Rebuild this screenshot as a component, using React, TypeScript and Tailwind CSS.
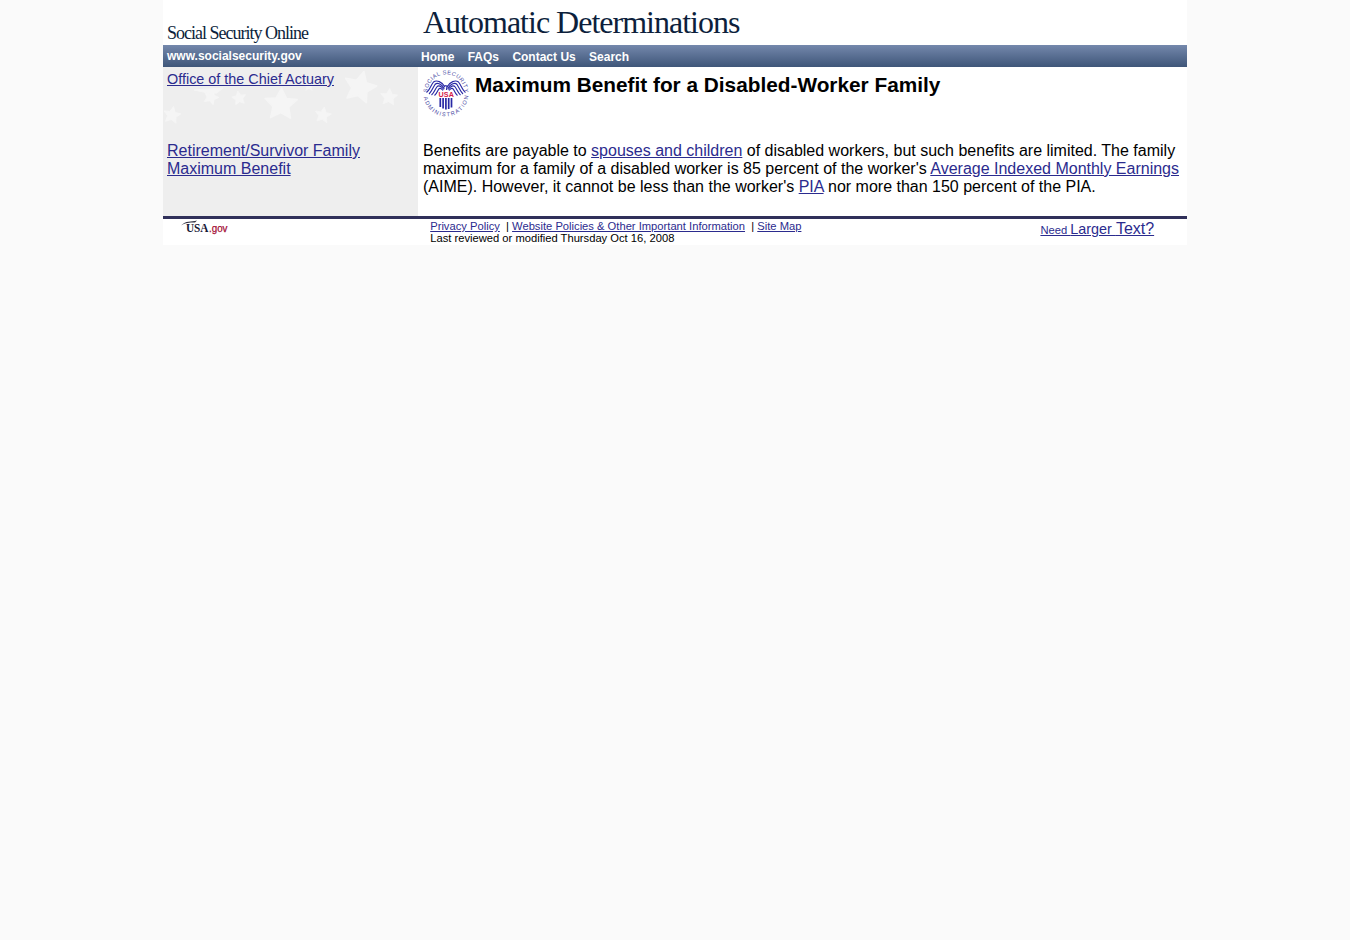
import React from 'react';

const STAR = '0,-10 3.2,-3.6 10,-3.1 4.9,1.8 6.2,8.6 0,5.4 -6.2,8.6 -4.9,1.8 -10,-3.1 -3.2,-3.6';

const stars = [
  { x: 9, y: 48, s: 0.85, r: 10 },
  { x: 48, y: 30, s: 0.75, r: 20 },
  { x: 76, y: 31, s: 0.7, r: -10 },
  { x: 118, y: 37, s: 1.6, r: 2 },
  { x: 160, y: 48, s: 0.8, r: 10 },
  { x: 197, y: 20, s: 1.6, r: 14 },
  { x: 226, y: 30, s: 0.85, r: 5 },
  { x: 146, y: 19, s: 0.5, r: 0 },
];

function Stars() {
  return (
    <svg className="absolute left-0 top-0" width="255" height="60" viewBox="0 0 255 60" aria-hidden="true">
      <g fill="#f5f5f5" stroke="#f5f5f5" strokeWidth="1" strokeLinejoin="round">
        {stars.map((p, i) => (
          <polygon key={i} points={STAR} transform={`translate(${p.x} ${p.y}) rotate(${p.r}) scale(${p.s})`} />
        ))}
        <path d="M31 23L60 21L54 26L45 26Z" />
      </g>
    </svg>
  );
}

function Seal() {
  return (
    <svg className="block shrink-0" width="48" height="48" viewBox="0 0 48 48" aria-hidden="true">
      <defs>
        <path id="sealTop" d="M4.4 23 A18.6 18.6 0 0 1 41.6 23" />
        <path id="sealBottom" d="M0.6 24 A22.4 22.4 0 0 0 45.4 24" />
      </defs>
      <g fill="#4646a2" fontFamily="'Liberation Sans', sans-serif" fontSize="5.6">
        <text textLength="57" lengthAdjust="spacing">
          <textPath href="#sealTop" startOffset="0.5">SOCIAL SECURITY</textPath>
        </text>
        <text textLength="65" lengthAdjust="spacing">
          <textPath href="#sealBottom" startOffset="3">ADMINISTRATION</textPath>
        </text>
      </g>
      <g fill="none" stroke="#2929a5" strokeWidth="1.15">
        <path d="M22 17C19 11.500 13.500 9.800 10.500 12C8 15 6.500 20.500 3.500 22.500" />
        <path d="M21.500 18.500C18 13.500 14 12.300 12 14.500C10 17.500 8.500 22 6 24" />
        <path d="M21 19.500C18 16 15.500 14.800 13.800 17C12 19.500 11 23 8.500 25" />
        <path d="M20 20.500C18 18 16.500 17.800 15.500 19.500C14.500 21.500 13.500 24 11.500 25.500" />
        <path d="M24 17C27 11.500 32.500 9.800 35.500 12C38 15 39.500 20.500 42.500 22.500" />
        <path d="M24.500 18.500C28 13.500 32 12.300 34 14.500C36 17.500 37.500 22 40 24" />
        <path d="M25 19.500C28 16 30.500 14.800 32.200 17C34 19.500 35 23 37.500 25" />
        <path d="M26 20.500C28 18 29.500 17.800 30.500 19.500C31.500 21.500 32.500 24 34.500 25.500" />
        <path d="M21.500 15.500L24 16L23.500 20" />
      </g>
      <path d="M17.3 28v9M20.100 28v10.500M22.900 28v11.500M25.700 28v11M28.500 28v9.500" stroke="#2929a5" strokeWidth="1.7" />
      <text x="15.5" y="27.3" textLength="15.5" lengthAdjust="spacing" fontFamily="'Liberation Sans', sans-serif" fontWeight="700" fontSize="7.2" fill="#d51c4b">USA</text>
    </svg>
  );
}

function UsaLogo() {
  return (
    <svg className="block" width="50" height="18" viewBox="0 0 50 18" aria-hidden="true">
      <path d="M0 6.500C5 1.500 10 3 16 1.500L14 3.600C8 3.600 5 3.800 0 6.500Z" fill="#303040" />
      <text x="5" y="13.3" textLength="22.5" lengthAdjust="spacingAndGlyphs" fontFamily="'Liberation Serif', serif" fontWeight="700" fontSize="13.5" fill="#161635">USA</text>
      <text x="28" y="13.3" textLength="18.500" lengthAdjust="spacingAndGlyphs" fontFamily="'Liberation Sans', sans-serif" fontSize="11" fill="#a30b32" stroke="#a30b32" strokeWidth=".25">.gov</text>
    </svg>
  );
}

function A({ children, className = '' }: { children: React.ReactNode; className?: string }) {
  return <a href="#" className={`text-[#2b2b8e] underline ${className}`}>{children}</a>;
}

export default function App() {
  return (
    <div className="min-h-screen bg-[#fafafa] font-['Liberation_Sans',Arial,sans-serif] text-base leading-[18px] text-black">
      <div className="mx-auto w-[1024px] bg-white">
        <header className="flex h-[45px] font-['Liberation_Serif',serif] text-[#0d1f3c]">
          <div className="w-[256px] pl-1 pt-[23px] text-[18px] leading-5 tracking-[-1px]">Social Security Online</div>
          <h1 className="pl-1 pt-1 text-[32px] leading-9 tracking-[-1px]">Automatic Determinations</h1>
        </header>

        <nav className="flex h-[22px] bg-linear-to-b from-[#7488ac] to-[#3f5679] text-[12px] font-bold leading-[22px] text-white">
          <div className="w-[258px] pl-1">www.socialsecurity.gov</div>
          <div className="flex gap-[13.35px] pt-px">
            <a href="#">Home</a>
            <a href="#">FAQs</a>
            <a href="#">Contact Us</a>
            <a href="#">Search</a>
          </div>
        </nav>

        <div className="flex h-[149px]">
          <aside className="relative w-[255px] bg-[#eeeeee] pl-1 pt-[3px]">
            <Stars />
            <div className="relative h-[72px] text-[14.4px]"><A>Office of the Chief Actuary</A></div>
            <div className="relative"><A>Retirement/Survivor Family<br />Maximum Benefit</A></div>
          </aside>
          <main className="flex-1 pl-[5px] pt-[3px]">
            <div className="flex h-[72px]">
              <Seal />
              <h2 className="pl-1 pt-[3px] text-[20.8px] font-bold leading-6">Maximum Benefit for a Disabled-Worker Family</h2>
            </div>
            <p className="whitespace-nowrap">
              Benefits are payable to <A>spouses and children</A> of disabled workers, but such benefits are limited. The family<br />
              maximum for a family of a disabled worker is 85 percent of the worker's <A>Average Indexed Monthly Earnings</A><br />
              (AIME). However, it cannot be less than the worker's <A>PIA</A> nor more than 150 percent of the PIA.
            </p>
          </main>
        </div>

        <footer className="flex h-[29px] border-t-[3px] border-[#30305a] text-[11.2px] leading-3">
          <div className="w-[267.2px] pl-[18px]"><UsaLogo /></div>
          <div className="flex-1 pt-px">
            <div className="whitespace-pre"><A>Privacy Policy</A>{'  | '}<A>Website Policies &amp; Other Important Information</A>{'  | '}<A>Site Map</A></div>
            <div>Last reviewed or modified Thursday Oct 16, 2008</div>
          </div>
          <div className="w-[146.6px] whitespace-nowrap leading-5">
            <A>Need <span className="text-[14.4px]">Larger </span><span className="text-[16px]">Text?</span></A>
          </div>
        </footer>
      </div>
    </div>
  );
}
